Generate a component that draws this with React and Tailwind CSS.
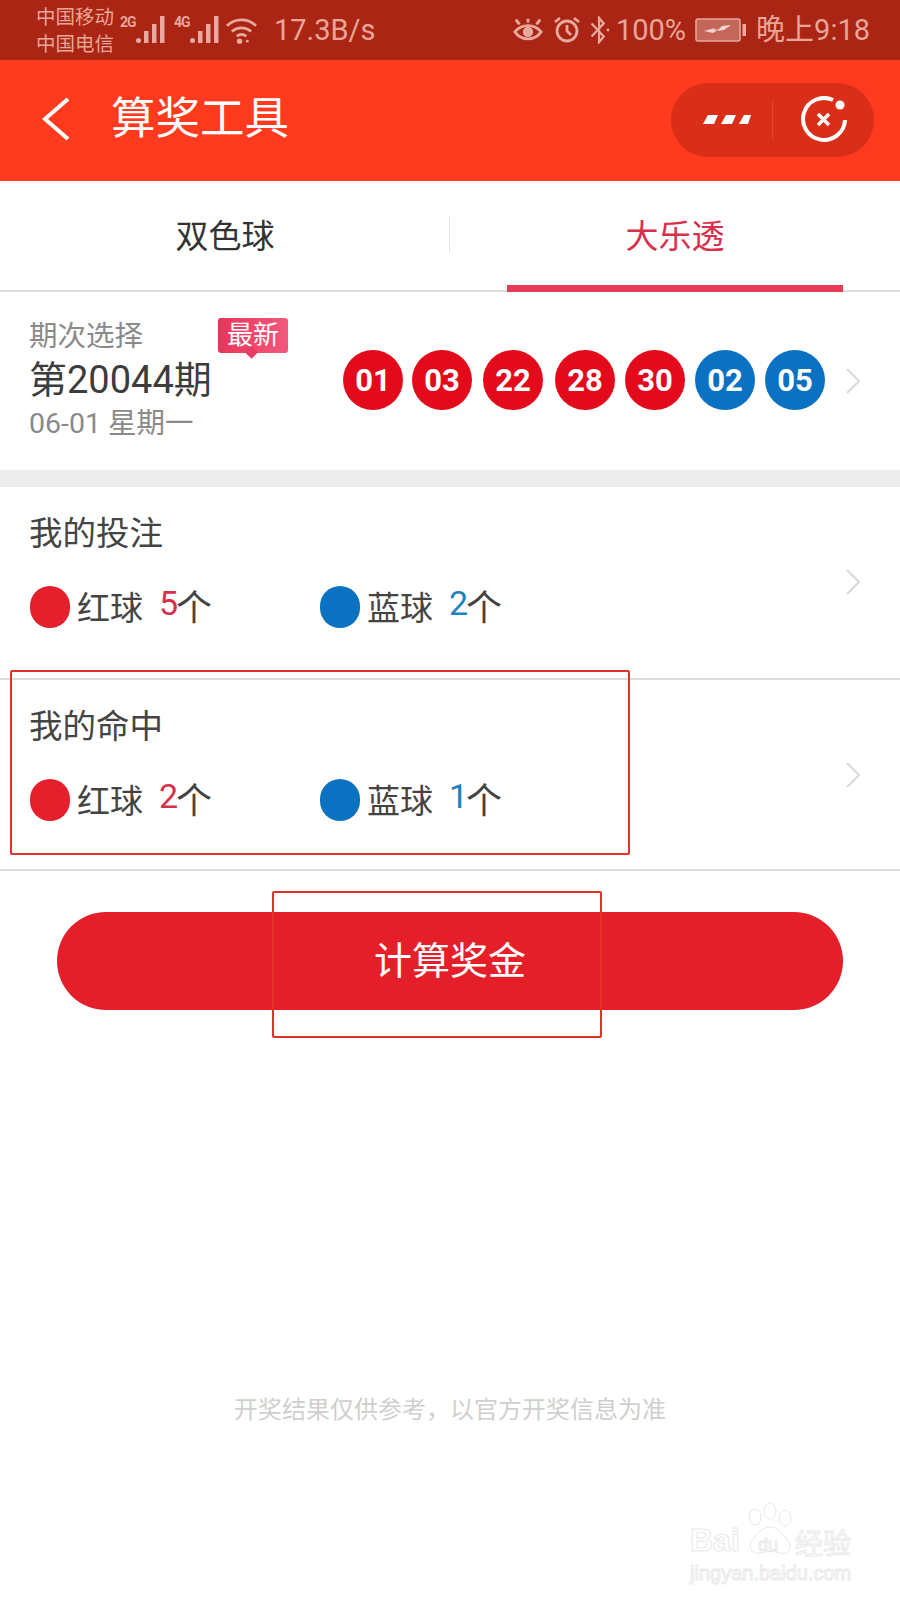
const ChevronRight = ({ className }) => (
  <svg viewBox="0 0 14 26" className={className} fill="none" stroke="#d9d9d9" strokeWidth="2">
    <path d="M1 1l12 12L1 25" />
  </svg>
);

const Signal = ({ label }) => (
  <div className="relative w-[45px] h-[30px]">
    <span className="absolute left-0 top-0 text-[14px] leading-[14px] font-bold tracking-[-1px]">{label}</span>
    <svg viewBox="0 0 30 28" className="absolute left-[15px] top-[1px] w-[30px] h-[28px]" fill="#e8a99e">
      <circle cx="3.500" cy="24.500" r="2.500" />
      <rect x="9" y="15" width="4.500" height="12" />
      <rect x="17" y="8" width="4.500" height="19" />
      <rect x="25" y="0" width="4.500" height="27" />
    </svg>
  </div>
);

const StatusBar = () => (
  <div className="h-[60px] bg-[#aa2513] text-[#e8a598] flex items-center pl-[36px] pr-[30px]">
    <div className="text-[19.500px] leading-[27px] w-[84px] mt-[1px]">
      <div>中国移动</div>
      <div>中国电信</div>
    </div>
    <Signal label="2G" />
    <div className="w-[9px]" />
    <Signal label="4G" />
    <svg viewBox="0 0 34 30" className="w-[33px] h-[29px] ml-[6px]" fill="none" stroke="#e8a99e" strokeWidth="2.800">
      <path d="M2 10c9-8 21-8 30 0" />
      <path d="M7 16c6-5 14-5 20 0" />
      <path d="M12 21c3-2.500 7-2.500 10 0" />
      <circle cx="15" cy="26" r="2.800" fill="#e8a99e" stroke="none" />
      <circle cx="23" cy="26" r="1.500" fill="#e8a99e" stroke="none" />
    </svg>
    <span className="text-[29px] ml-[16px] leading-none">17.3B/s</span>
    <div className="ml-auto flex items-center">
      <svg viewBox="0 0 32 26" className="w-[30px] h-[26px]" fill="none" stroke="#e8a99e" strokeWidth="3">
        <path d="M2 15c7-9 21-9 28 0-7 10-21 10-28 0z" />
        <circle cx="16" cy="15" r="5.500" fill="#e8a99e" stroke="none" />
        <path d="M3 2l4 5M29 2l-4 5M16 1v4" />
      </svg>
      <svg viewBox="0 0 28 28" className="w-[28px] h-[28px] ml-[10px]" fill="none" stroke="#e8a99e" strokeWidth="2.800">
        <circle cx="14" cy="15" r="10" />
        <path d="M14 9v6l4 4M2 6l5-4M26 6l-5-4" />
      </svg>
      <svg viewBox="0 0 22 30" className="w-[22px] h-[28px] ml-[8px]" fill="none" stroke="#e8a99e" strokeWidth="2.400">
        <path d="M2 8l13 14-5 6V2l5 6L2 22" />
        <circle cx="19.500" cy="15" r="1.500" fill="#e8a99e" stroke="none" />
      </svg>
      <span className="text-[29px] leading-none ml-[5px]">100%</span>
      <svg viewBox="0 0 52 26" className="w-[52px] h-[26px] ml-[9px]" fill="none">
        <rect x="1" y="2" width="44" height="22" rx="2" stroke="#e8a99e" strokeWidth="1.500" fill="#c4665a" />
        <rect x="47.500" y="7" width="3.500" height="12" fill="#e8a99e" />
        <path d="M9 14l11-3-1 2 5-1 3-3 9-1-7 5-6 1 1-2-6 4z" fill="#f2d3cd" />
      </svg>
      <span className="text-[29px] leading-none ml-[9px]">晚上9:18</span>
    </div>
  </div>
);

const Header = () => (
  <div className="h-[121px] bg-[#ff3a1f] flex items-center pl-[42px] pr-[26px] text-white">
    <svg viewBox="0 0 28 44" className="w-[28px] h-[44px] -mt-[4px]" fill="none" stroke="#fff" strokeWidth="4">
      <path d="M26 2L3 22l23 20" />
    </svg>
    <span className="text-[44.500px] leading-none ml-[41px] -mt-[2px]">算奖工具</span>
    <div className="ml-auto h-[74px] w-[203px] rounded-full bg-[#d92f18] flex items-center -mt-[2px]">
      <svg viewBox="0 0 48 12" className="w-[48px] h-[12px] ml-[32px]" fill="#fff">
        <path d="M5 1h10l-4 9H0zM23 1h10l-4 9H18zM41 1h7l-3 9H36z" />
      </svg>
      <div className="w-px h-[40px] bg-[#e8442c] ml-[21px]" />
      <svg viewBox="0 0 48 48" className="w-[48px] h-[48px] ml-[27px]" fill="none" stroke="#fff">
        <path d="M33 4A21 21 0 1 0 45 24" strokeWidth="4" />
        <circle cx="40" cy="9" r="4.500" fill="#fff" stroke="none" />
        <path d="M18 18l11 11M29 18L18 29" strokeWidth="3.500" />
      </svg>
    </div>
  </div>
);

const Tabs = () => (
  <div className="h-[111px] flex items-center relative border-b-2 border-[#dcdcdc]">
    <div className="flex-1 text-center text-[33px] text-[#333] mt-[2px]">双色球</div>
    <div className="w-px h-[36px] bg-[#e2e2e2] -mt-[4px] -ml-[1px]" />
    <div className="flex-1 text-center text-[33px] text-[#d8304a] mt-[2px]">大乐透</div>
    <div className="absolute left-[507px] w-[336px] h-[7px] bottom-[-2px] bg-[#e63a55]" />
  </div>
);

const Ball = ({ n, blue, className = "" }) => (
  <div
    className={`w-[60px] h-[60px] rounded-full flex items-center justify-center text-white font-bold text-[31px] leading-none ${
      blue ? "bg-[#0a72c0]" : "bg-[#e30a1b]"
    } ${className}`}
  >
    {n}
  </div>
);

const DrawInfo = () => (
  <div className="h-[178px] flex items-center pl-[29px] pr-[40px]">
    <div className="relative w-[314px] -mt-[3px]">
      <div className="text-[28.500px] leading-[40px] text-[#8a8a8a] mt-[1px]">期次选择</div>
      <div className="text-[38px] leading-[47px] text-[#3c3c3c]">第20044期</div>
      <div className="text-[28.500px] leading-[40px] text-[#8a8a8a]">06-01 星期一</div>
      <div className="absolute left-[189px] top-[2px] w-[70px] h-[35px] rounded-[3px] bg-gradient-to-r from-[#e8345a] to-[#f2587c] text-white text-[26px] leading-[35px] text-center">
        最新
        <div className="absolute left-[29px] bottom-[-4px] w-[9px] h-[9px] rotate-45 bg-[#ea3c60]" />
      </div>
    </div>
    <div className="flex gap-[10px] items-center -mt-[2px]">
      <Ball n="01" />
      <Ball n="03" className="-ml-[1px]" />
      <Ball n="22" className="ml-[1px]" />
      <Ball n="28" className="ml-[2px]" />
      <Ball n="30" />
      <Ball n="02" blue />
      <Ball n="05" blue />
    </div>
    <ChevronRight className="w-[14px] h-[26px] ml-auto" />
  </div>
);

const BallCount = ({ color, numColor, label, count, className = "" }) => (
  <div className={`flex items-center ${className}`}>
    <div className={`w-[40px] h-[42px] rounded-full ${color}`} />
    <span className="text-[33px] text-[#444] ml-[7px] mt-[2px] leading-none">{label}</span>
    <span className={`text-[34px] ml-[16px] -mt-[8px] leading-none ${numColor}`}>{count}</span>
    <span className="text-[36px] text-[#444] mt-[4px] leading-none -ml-[2px]">个</span>
  </div>
);

const BetRow = ({ title, red, blue, className = "" }) => (
  <div className={`relative pl-[29px] pt-[25px] border-b-2 border-[#dcdcdc] ${className}`}>
    <div className="text-[33.500px] leading-[44px] text-[#444]">{title}</div>
    <div className="flex mt-[30px] ml-[1px]">
      <BallCount color="bg-[#e51f2b]" numColor="text-[#d8304a]" label="红球" count={red} className="w-[290px]" />
      <BallCount color="bg-[#0a72c0]" numColor="text-[#1b84c0]" label="蓝球" count={blue} />
    </div>
    <ChevronRight className="absolute right-[40px] top-[70px] mt-[12px] w-[14px] h-[26px]" />
  </div>
);

const Watermark = () => (
  <div className="absolute left-[688px] top-[1498px] w-[170px] h-[90px] text-white font-['Liberation_Sans',sans-serif] [-webkit-text-stroke:1px_#e9e9e9]">
    <svg viewBox="0 0 60 60" className="absolute left-[52px] top-[4px] w-[60px] h-[60px]" fill="#fff" stroke="#e9e9e9" strokeWidth="1">
      <ellipse cx="15" cy="15" rx="6" ry="8" />
      <ellipse cx="30" cy="9" rx="6" ry="8" />
      <ellipse cx="45" cy="16" rx="6" ry="8" />
      <path d="M30 25c8 0 14 8 19 15 4 8-3 13-10 11-6-2-12-2-18 0-8 2-13-4-10-11 5-7 11-15 19-15z" />
    </svg>
    <span className="absolute left-[2px] top-[26px] text-[32px] leading-none font-bold">Bai</span>
    <span className="absolute left-[70px] top-[38px] text-[18px] leading-none">du</span>
    <span className="absolute left-[107px] top-[30px] text-[28px] leading-none font-['Noto_Sans_CJK_SC',sans-serif]">经验</span>
    <span className="absolute left-[2px] top-[65px] text-[20px] leading-none">jingyan.baidu.com</span>
  </div>
);

export default function App() {
  return (
    <div className="relative w-[900px] h-[1600px] overflow-hidden bg-white font-['Roboto','Noto_Sans_CJK_SC',sans-serif]">
      <StatusBar />
      <Header />
      <Tabs />
      <DrawInfo />
      <div className="h-[17px] bg-[#ededed]" />
      <BetRow title="我的投注" red="5" blue="2" className="h-[193px]" />
      <BetRow title="我的命中" red="2" blue="1" className="h-[191px]" />
      <div className="mx-[57px] mt-[41px] h-[98px] rounded-full bg-[#e41f2a] flex items-center justify-center text-white text-[38px]">
        计算奖金
      </div>
      <div className="mt-[383px] text-center text-[24px] leading-[34px] text-[#cfcfcf]">
        开奖结果仅供参考，以官方开奖信息为准
      </div>
      <Watermark />
      {/* red annotation boxes on top of the screenshot */}
      <div className="absolute left-[10px] top-[670px] w-[620px] h-[185px] border-2 border-[#e2302b] rounded-[2px]" />
      <div className="absolute left-[272px] top-[891px] w-[330px] h-[147px] border-2 border-[#e2302b] rounded-[2px]" />
    </div>
  );
}
